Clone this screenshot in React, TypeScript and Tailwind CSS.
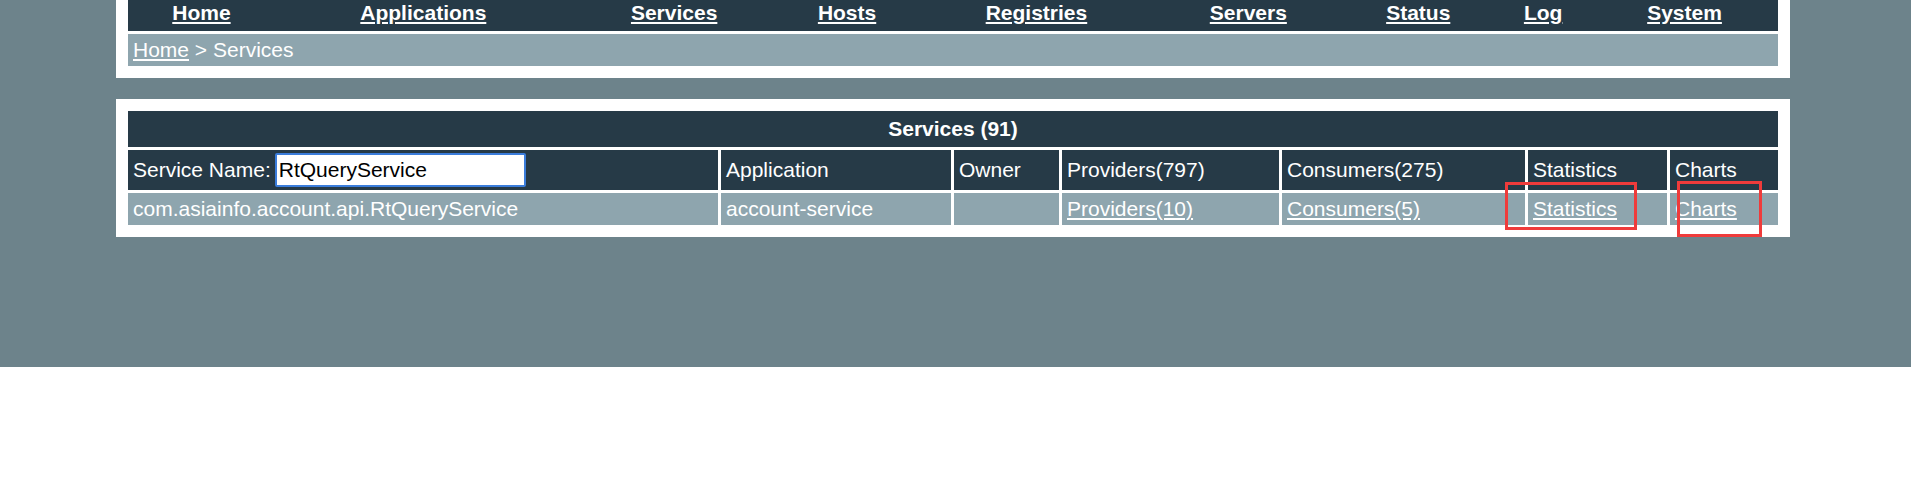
import React from "react";

const navItems: { label: string; w: string }[] = [
  { label: "Home", w: "w-[147px]" },
  { label: "Applications", w: "w-[297px]" },
  { label: "Services", w: "w-[205px]" },
  { label: "Hosts", w: "w-[141px]" },
  { label: "Registries", w: "w-[238px]" },
  { label: "Servers", w: "w-[186px]" },
  { label: "Status", w: "w-[154px]" },
  { label: "Log", w: "w-[96px]" },
  { label: "System", w: "w-[187px]" },
];

const cell = "flex items-center pl-[5px] whitespace-nowrap";

export default function App() {
  return (
    <div className="min-h-screen bg-white font-['Liberation_Sans',Arial,sans-serif] text-[21px] text-white">
      <div className="h-[367px] bg-[#6d838b] overflow-hidden">
        {/* top box */}
        <div className="mt-[-14px] ml-[116px] w-[1674px] bg-white p-[12px] flex flex-col gap-[3px]">
          <nav className="h-[33px] bg-[#263a47] flex items-center pb-[4px]">
            {navItems.map((n) => (
              <div key={n.label} className={`${n.w} text-center`}>
                <a href="#" className="font-bold underline text-white">
                  {n.label}
                </a>
              </div>
            ))}
          </nav>
          <div className="h-[32px] bg-[#8ea5ae] flex items-center pl-[5px]">
            <a href="#" className="underline text-white">
              Home
            </a>
            <span className="whitespace-pre">{" > Services"}</span>
          </div>
        </div>

        {/* services box */}
        <div className="relative mt-[21px] ml-[116px] w-[1674px] bg-white p-[12px]">
          <div className="grid grid-cols-[590px_230px_105px_217px_243px_139px_108px] grid-rows-[36px_40px_32px] gap-[3px]">
            <div className="col-span-7 bg-[#263a47] flex items-center justify-center font-bold">
              Services (91)
            </div>

            <div className={`${cell} bg-[#263a47]`}>
              <span>Service Name:</span>
              <input
                readOnly
                value="RtQueryService"
                className="ml-[4px] h-[34px] w-[251px] rounded-[2px] border-2 border-[#3b7ddb] bg-white px-[2px] text-[21px] text-black outline-none font-['Liberation_Sans',Arial,sans-serif]"
              />
            </div>
            <div className={`${cell} bg-[#263a47]`}>Application</div>
            <div className={`${cell} bg-[#263a47]`}>Owner</div>
            <div className={`${cell} bg-[#263a47]`}>Providers(797)</div>
            <div className={`${cell} bg-[#263a47]`}>Consumers(275)</div>
            <div className={`${cell} bg-[#263a47]`}>Statistics</div>
            <div className={`${cell} bg-[#263a47]`}>Charts</div>

            <div className={`${cell} bg-[#8ea5ae]`}>com.asiainfo.account.api.RtQueryService</div>
            <div className={`${cell} bg-[#8ea5ae]`}>account-service</div>
            <div className={`${cell} bg-[#8ea5ae]`}></div>
            <div className={`${cell} bg-[#8ea5ae]`}>
              <a href="#" className="underline text-white">Providers(10)</a>
            </div>
            <div className={`${cell} bg-[#8ea5ae]`}>
              <a href="#" className="underline text-white">Consumers(5)</a>
            </div>
            <div className={`${cell} bg-[#8ea5ae]`}>
              <a href="#" className="underline text-white">Statistics</a>
            </div>
            <div className={`${cell} bg-[#8ea5ae]`}>
              <a href="#" className="underline text-white">Charts</a>
            </div>
          </div>

          {/* red annotation boxes */}
          <div className="absolute left-[1389px] top-[83px] w-[132px] h-[48px] border-[3px] border-[#ef3b3b] pointer-events-none" />
          <div className="absolute left-[1561px] top-[82px] w-[85px] h-[56px] border-[3px] border-[#ef3b3b] pointer-events-none" />
        </div>
      </div>
    </div>
  );
}
